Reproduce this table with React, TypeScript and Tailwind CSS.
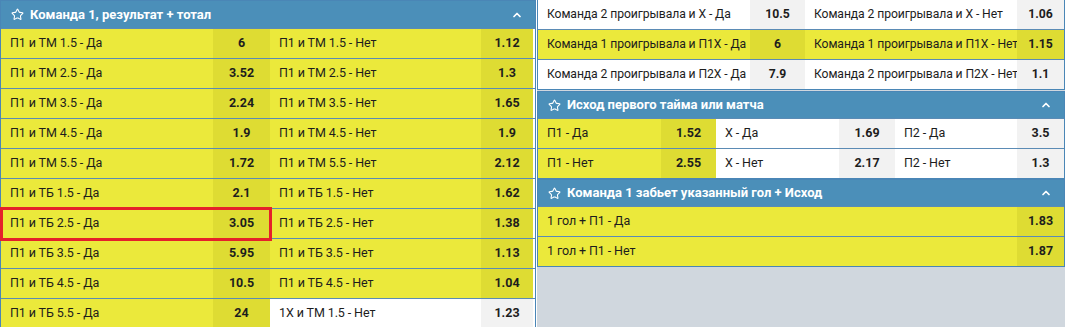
import { Star, ChevronUp } from 'lucide-react'

type Pair = [string, string]

const leftRows: [Pair, Pair, boolean][] = [
  [['П1 и ТМ 1.5 - Да', '6'], ['П1 и ТМ 1.5 - Нет', '1.12'], true],
  [['П1 и ТМ 2.5 - Да', '3.52'], ['П1 и ТМ 2.5 - Нет', '1.3'], true],
  [['П1 и ТМ 3.5 - Да', '2.24'], ['П1 и ТМ 3.5 - Нет', '1.65'], true],
  [['П1 и ТМ 4.5 - Да', '1.9'], ['П1 и ТМ 4.5 - Нет', '1.9'], true],
  [['П1 и ТМ 5.5 - Да', '1.72'], ['П1 и ТМ 5.5 - Нет', '2.12'], true],
  [['П1 и ТБ 1.5 - Да', '2.1'], ['П1 и ТБ 1.5 - Нет', '1.62'], true],
  [['П1 и ТБ 2.5 - Да', '3.05'], ['П1 и ТБ 2.5 - Нет', '1.38'], true],
  [['П1 и ТБ 3.5 - Да', '5.95'], ['П1 и ТБ 3.5 - Нет', '1.13'], true],
  [['П1 и ТБ 4.5 - Да', '10.5'], ['П1 и ТБ 4.5 - Нет', '1.04'], true],
  [['П1 и ТБ 5.5 - Да', '24'], ['1Х и ТМ 1.5 - Нет', '1.23'], false],
]

const lostRows: [Pair, Pair, boolean][] = [
  [['Команда 2 проигрывала и Х - Да', '10.5'], ['Команда 2 проигрывала и Х - Нет', '1.06'], false],
  [['Команда 1 проигрывала и П1Х - Да', '6'], ['Команда 1 проигрывала и П1Х - Нет', '1.15'], true],
  [['Команда 2 проигрывала и П2Х - Да', '7.9'], ['Команда 2 проигрывала и П2Х - Нет', '1.1'], false],
]

const Y_LABEL = 'bg-[#ebe93b]'
const Y_ODDS = 'bg-[#dedc33]'
const W_LABEL = 'bg-white'
const W_ODDS = 'bg-[#f2f2f2]'

function Cell({ label, odds, hl }: { label: string; odds: string; hl: boolean }) {
  return (
    <>
      <div className={`flex items-center pl-[9px] whitespace-nowrap tracking-[-0.1px] ${hl ? Y_LABEL : W_LABEL}`}>{label}</div>
      <div className={`flex items-center justify-center font-bold ${hl ? Y_ODDS : W_ODDS}`}>{odds}</div>
    </>
  )
}

function Header({ title, h }: { title: string; h: string }) {
  return (
    <div className={`flex items-center bg-[#4b8fb9] text-white ${h}`}>
      <Star className="ml-[10px] w-[13px] h-[13px]" strokeWidth={2} />
      <span className="ml-[6px] font-bold text-[13px]">{title}</span>
      <ChevronUp className="ml-auto mr-[12px] w-[12px] h-[12px]" strokeWidth={3.5} />
    </div>
  )
}

export default function App() {
  return (
    <div className="flex w-[1076px] h-[327px] overflow-hidden bg-white text-[12.5px] text-[#1d1d1d] font-['Roboto',sans-serif]">
      {/* left market */}
      <div className="w-[536px] shrink-0 border border-[#4a86b6] self-start">
        <Header title="Команда 1, результат + тотал" h="h-[27px]" />
        {leftRows.map(([a, b, hlB], i) => (
          <div key={i} className="relative grid grid-cols-[212px_57px_211px_52px] h-[30px] border-t border-[#5b8bb5]">
            <Cell label={a[0]} odds={a[1]} hl />
            <Cell label={b[0]} odds={b[1]} hl={hlB} />
            {i === 6 && (
              <span className="absolute z-10 -left-[1px] -top-[2px] w-[272px] h-[34px] border-[3px] border-[#e5212a]" />
            )}
          </div>
        ))}
      </div>

      <div className="w-[1px] shrink-0" />

      {/* right column */}
      <div className="w-[528px] shrink-0 bg-[#d0d7de] flex flex-col">
        <div className="border-x border-b border-[#4a86b6] bg-white text-[12.2px]">
          {lostRows.map(([a, b, hl], i) => (
            <div
              key={i}
              className={`grid grid-cols-[212px_55px_212px_47px] ${i === 0 ? 'h-[29px]' : 'h-[30px] border-t border-[#5b8bb5]'}`}
            >
              <Cell label={a[0]} odds={a[1]} hl={hl} />
              <Cell label={b[0]} odds={b[1]} hl={hl} />
            </div>
          ))}
        </div>

        <div className="mt-[1px] border border-[#4a86b6] bg-white">
          <Header title="Исход первого тайма или матча" h="h-[26px]" />
          {[
            ['П1 - Да', '1.52', 'Х - Да', '1.69', 'П2 - Да', '3.5'],
            ['П1 - Нет', '2.55', 'Х - Нет', '2.17', 'П2 - Нет', '1.3'],
          ].map((r, i) => (
            <div key={i} className="grid grid-cols-[123px_55px_123px_56px_122px_47px] h-[30px] border-t border-[#5b8bb5]">
              <Cell label={r[0]} odds={r[1]} hl />
              <Cell label={r[2]} odds={r[3]} hl={false} />
              <Cell label={r[4]} odds={r[5]} hl={false} />
            </div>
          ))}
        </div>

        <div className="border border-[#4a86b6] bg-white">
          <Header title="Команда 1 забьет указанный гол + Исход" h="h-[26px]" />
          {[
            ['1 гол + П1 - Да', '1.83'],
            ['1 гол + П1 - Нет', '1.87'],
          ].map((r, i) => (
            <div key={i} className="grid grid-cols-[479px_47px] h-[30px] border-t border-[#5b8bb5]">
              <Cell label={r[0]} odds={r[1]} hl />
            </div>
          ))}
        </div>
      </div>
    </div>
  )
}
